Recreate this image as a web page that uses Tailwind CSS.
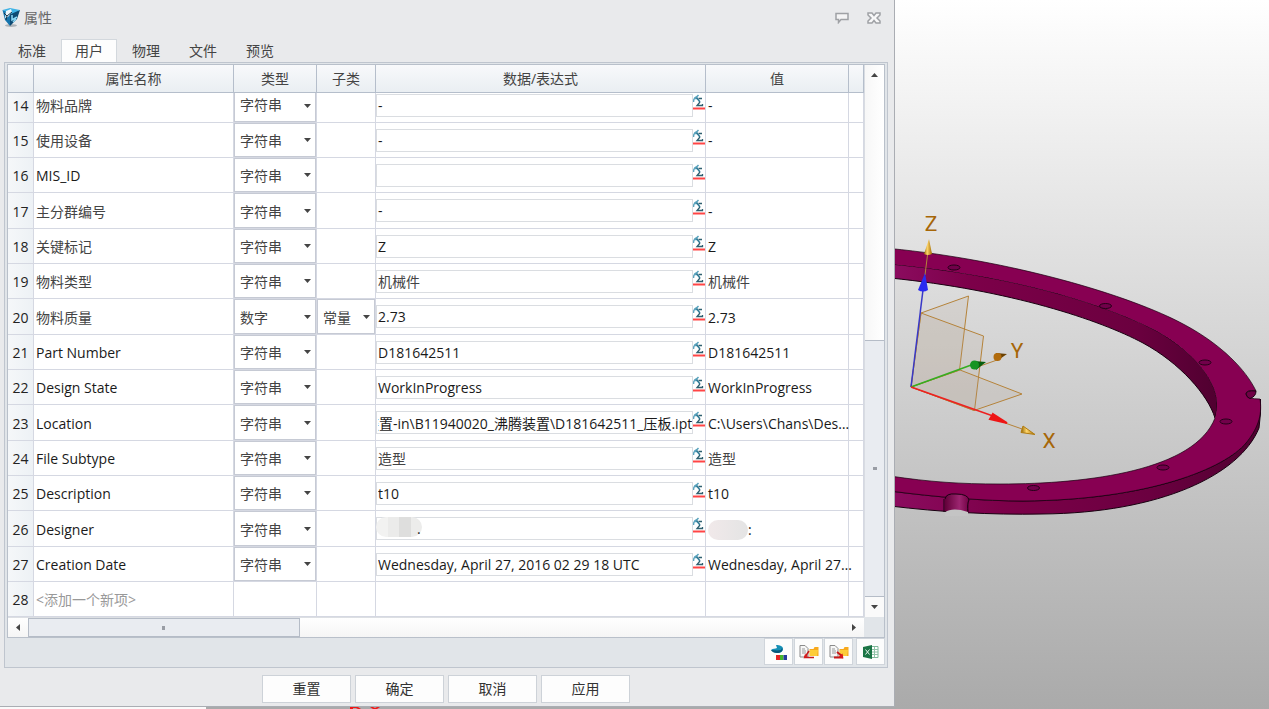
<!DOCTYPE html>
<html lang="zh-CN">
<head>
<meta charset="utf-8">
<title>属性</title>
<script src="https://cdn.jsdelivr.net/npm/@tailwindcss/browser@4"></script>
</head>
<body class="h-screen overflow-hidden bg-[#a9aaab] font-['Open_Sans','Noto_Sans_CJK_SC',sans-serif] text-sm text-[#222]">
<div class="flex h-full">

<div class="flex min-w-0 flex-[895] flex-col">
<section class="flex min-h-0 flex-1 flex-col border-r border-b border-[#aaadb3] bg-[#e9eaec] pr-1.5 pl-1" aria-label="属性">
  <header class="flex h-9 shrink-0 items-center gap-1">
    <svg class="-ml-1 size-5" viewBox="0 0 20 20" aria-hidden="true">
      <ellipse cx="11" cy="17.500" rx="6" ry="1.500" fill="#aeb3b8"/>
      <path d="M2.500 2 10 4v14L5 12z" fill="#1474ad"/>
      <path d="M10 4l10-2-3 9-7 7z" fill="#0d4a73"/>
      <path d="M2.500 2 10 0l10 2-9 4z" fill="#3fb3e6"/>
      <path d="M6 3l5-2 1 3-4 5-3 1z" fill="#eef6fa"/>
      <path d="M4 5l3 3 5-4M7 8l-1 4" stroke="#14344a" fill="none"/>
      <path d="M12 7v5l5-3M13 14l3-3" stroke="#8bd8f6" stroke-width="1.500" fill="none"/>
    </svg>
    <h1 class="flex-1 text-sm text-[#666]">属性</h1>
    <button class="flex w-7 justify-center" aria-label="反馈"><svg class="h-3 w-4" viewBox="0 0 16 12"><path d="M2 1.500h12v6H7L4.500 10.500v-3H2z" fill="#f4f4f5" stroke="#9fa1a5" stroke-width="1.500"/></svg></button>
    <button class="flex w-7 justify-center" aria-label="关闭"><svg class="h-3 w-4" viewBox="0 0 16 12"><path d="M2 1h4l2 2.500L10 1h4v2l-3 3 3 3v2h-4L8 8.500 6 11H2V9l3-3-3-3z" fill="#f8f8f9" stroke="#9fa1a5" stroke-width="1.500"/></svg></button>
  </header>

  <nav class="flex h-[26px] shrink-0 items-end gap-px pt-[3px] text-[#444]" role="tablist">
    <button class="h-[23px] w-14" role="tab">标准</button>
    <button class="h-[23px] w-14 border border-b-0 border-[#d3d8dd] bg-[#fdfdfd]" role="tab" aria-selected="true">用户</button>
    <button class="h-[23px] w-14" role="tab">物理</button>
    <button class="h-[23px] w-14" role="tab">文件</button>
    <button class="h-[23px] w-14" role="tab">预览</button>
  </nav>

  <div class="flex flex-col border border-[#bfc5ce] bg-[#e1e5e9] px-0.5 py-px">
    <div class="border border-[#b9c0ca]">
      <div class="flex">
        <div class="min-w-0 flex-1 bg-white">
          <table class="w-full table-fixed border-separate border-spacing-0">
            <colgroup><col class="w-[26px]"><col class="w-[200px]"><col class="w-[83px]"><col class="w-[59px]"><col><col class="w-[143px]"><col class="w-[15px]"></colgroup>
            <thead>
              <tr class="h-7 bg-linear-to-b from-[#f8f9fb] to-[#e9eef2] text-[#444] *:border-r *:border-b *:border-[#b5becb] *:p-0 *:font-normal">
                <th></th><th>属性名称</th><th>类型</th><th>子类</th><th>数据/表达式</th><th>值</th><th class="border-r-0"></th>
              </tr>
            </thead>
            <tbody id="rows"></tbody>
          </table>
        </div>
        <div class="flex w-5 flex-col border-l border-[#d8dce2] bg-linear-to-r from-[#f7f7f7] to-white">
          <button class="flex h-5 items-center justify-center" aria-label="向上滚动"><svg class="h-1 w-[7px]" viewBox="0 0 7 4"><path d="M0 4 3.500 0 7 4z" fill="#444"/></svg></button>
          <div class="flex-[256]"></div>
          <div class="flex flex-[256] items-center justify-center border-y border-[#b5bcc7] bg-[#e9ecf1]"><span class="h-[3px] w-1 bg-[#999da5]"></span></div>
          <button class="flex h-5 items-center justify-center bg-[#fafafa]" aria-label="向下滚动"><svg class="h-1 w-[7px]" viewBox="0 0 7 4"><path d="M0 0h7L3.500 4z" fill="#444"/></svg></button>
        </div>
      </div>
      <div class="flex h-5">
        <div class="flex flex-1 border-t border-[#dcdfe3] bg-linear-to-b from-white to-[#f5f5f5]">
          <button class="flex w-5 items-center justify-center" aria-label="向左滚动"><svg class="h-[7px] w-1" viewBox="0 0 4 7"><path d="M4 0v7L0 3.500z" fill="#444"/></svg></button>
          <div class="flex flex-[271] items-center justify-center border border-[#b5bcc7] bg-[#e9ecf1]"><span class="h-1 w-[3px] bg-[#999da5]"></span></div>
          <div class="flex-[547]"></div>
          <button class="flex w-5 items-center justify-center" aria-label="向右滚动"><svg class="h-[7px] w-1" viewBox="0 0 4 7"><path d="M0 0v7l4-3.500z" fill="#444"/></svg></button>
        </div>
        <div class="w-5"></div>
      </div>
    </div>
    <div class="flex justify-end gap-px pb-px *:flex *:h-[27px] *:w-[29px] *:items-center *:justify-center *:border *:border-[#d0d5db] *:bg-[#fcfcfc]">
      <button aria-label="颜色属性"><svg class="h-4 w-5" viewBox="0 0 20 16"><path d="M2 6C4 4 6 5 8 4L7 1c4 0 7 1 7 4 0 2-2 4-5 4-3 0-5-1-7-3z" fill="#168fb5"/><path d="M2 6c3 0 5 1 10 0l1-2c2 3-2 5-5 5C5 9 3 8 2 6z" fill="#07587c"/><path d="M7 11h4v5H7z" fill="#e42323"/><path d="M11 11h3.500v5H11z" fill="#43b52b"/><path d="M14.500 11H18v5h-3.500z" fill="#253a9c"/></svg></button>
      <button aria-label="导入"><svg class="h-4 w-5" viewBox="0 0 20 16"><path d="M1 1.500h5l3 3V13H1z" fill="#f7f7f7" stroke="#8b8b8b"/><path d="M3 5h3M3 7h4M3 9h4" stroke="#999"/><path d="M10.500 5h4l1-2h4v9h-9z" fill="#f7a91d"/><path d="M11 6h8l-1 6h-7z" fill="#fdcc39"/><path d="M5 13.500h10M6 13l4-6" stroke="#c71919" stroke-width="1.500" fill="none"/><path d="M4.500 14.500 6 10l3 2z" fill="#d91b1b"/></svg></button>
      <button aria-label="导出"><svg class="h-4 w-5" viewBox="0 0 20 16"><path d="M1 1.500h5l3 3V13H1z" fill="#f7f7f7" stroke="#8b8b8b"/><path d="M3 5h3M3 7h4M3 9h4" stroke="#999"/><path d="M10.500 5h4l1-2h4v9h-9z" fill="#f7a91d"/><path d="M11 6h8l-1 6h-7z" fill="#fdcc39"/><path d="M5 13.500h9M8 8l5 4" stroke="#c71919" stroke-width="2" fill="none"/><path d="m14.500 14.500-1-5-4 3.500z" fill="#d91b1b"/></svg></button>
      <button class="ml-0.5" aria-label="导出到 Excel"><svg class="h-4 w-5" viewBox="0 0 20 16"><path d="M10 2.500h7v11h-7z" fill="#fff" stroke="#7fb899"/><path d="M10 5.500h7M10 8h7M10 10.500h7M13.500 3v10" stroke="#8fc2a6"/><path d="m2 3 9-2v14l-9-2z" fill="#1b7445"/><path d="m4.500 5.500 4 5m0-5-4 5" stroke="#e6f2eb"/></svg></button>
    </div>
  </div>

  <footer class="flex justify-center gap-1 pt-[7px] text-[#333] *:h-7 *:w-[89px] *:border *:border-[#cdd2d8] *:bg-[#fdfdfd]">
    <button>重置</button><button>确定</button><button>取消</button><button>应用</button>
  </footer>
</section>
<div class="flex h-0.5 shrink-0">
  <div class="w-[23%] bg-[#fafafa]"></div>
  <svg class="ml-[16%] h-0.5 w-8" viewBox="0 0 32 2" aria-hidden="true"><path d="M1 0h8l3 2H9L7 1H4v1H1zM21 0h3l2 1 2-1h3l-3 2h-4z" fill="#f01818"/></svg>
</div>
</div>

<main class="min-w-0 flex-[374] bg-linear-to-b from-white to-[#aaa]">
  <svg class="h-full w-full" viewBox="895 0 374 709" aria-label="压板模型">
    <defs>
      <linearGradient id="inner" x1="0" x2="1"><stop offset="0" stop-color="#8c0c60"/><stop offset=".25" stop-color="#7c0049"/><stop offset=".75" stop-color="#6b003f"/><stop offset="1" stop-color="#500030"/></linearGradient>
      <linearGradient id="side" x1="0" x2="1"><stop offset="0" stop-color="#8c0c60"/><stop offset=".3" stop-color="#7c0049"/><stop offset=".7" stop-color="#6b0040"/><stop offset="1" stop-color="#500030"/></linearGradient>
      <linearGradient id="notch" x1="0" x2="1"><stop offset="0" stop-color="#620039"/><stop offset=".6" stop-color="#9c2570"/><stop offset="1" stop-color="#720044"/></linearGradient>
      <linearGradient id="gold" x1="0" x2="1"><stop offset="0" stop-color="#8f6200"/><stop offset=".4" stop-color="#ffd66b"/><stop offset="1" stop-color="#a06a00"/></linearGradient>
    </defs>
    <g stroke="#180010" stroke-width="1" stroke-linejoin="round">
      <path d="M890 491C935 497 985 501 1023 501C1150 500 1225 468 1246 443Q1262 424 1260.500 399V413L1259 428C1240 475 1160 513 1042 514C990 515 940 512 890 506z" fill="url(#side)"/>
      <path d="M890 264C1010 275 1100 302 1155 330C1195 352 1217 382 1217 403Q1217 412 1215 418C1208 395 1180 363 1143 343C1100 320 1010 290 890 278z" fill="url(#inner)"/>
      <path fill-rule="evenodd" stroke="none" d="M890 248.500C1010 260 1130 295 1185 325C1222 345 1246 370 1256 391Q1246 390 1246 394Q1247 399 1260 399C1262 412 1260 426 1246 443C1225 468 1150 500 1023 501C985 501 935 497 890 491V476C930 482 960 484 1000 484C1090 484 1195 470 1215 418Q1217 412 1217 403C1217 382 1195 352 1155 330C1100 302 1010 275 890 264z" fill="#870052"/>
      <path fill="none" stroke-width=".7" d="M890 248.500C1010 260 1130 295 1185 325C1222 345 1246 370 1256 391Q1246 390 1246 394Q1247 399 1260 399C1262 412 1260 426 1246 443C1225 468 1150 500 1023 501C985 501 935 497 890 491M890 476C930 482 960 484 1000 484C1090 484 1195 470 1215 418"/>
      <path d="M1256 391q-10-1-10 3 1 4 4 4.500 6-2 6-7.500z" fill="#6f0045"/>
    </g>
    <path d="M945 511V499Q946 493 956 494Q968 494 969 500V513z" fill="url(#notch)"/>
    <path d="M944 512V499M945 499Q946 493 956 494Q968 494 969 500M969 500Q967 503 968 513" fill="none" stroke="#180010"/>
    <path d="M945 512.500Q952 507 968 512V516H945z" fill="#c4c4c4"/>
    <g fill="#71004a" stroke="#250018">
      <ellipse cx="954" cy="267.500" rx="6" ry="2.500"/><ellipse cx="1105.500" cy="306" rx="6" ry="2.500"/><ellipse cx="1205" cy="362.500" rx="6" ry="2.500"/><ellipse cx="1226" cy="421.500" rx="6" ry="2.500"/><ellipse cx="1163" cy="467.500" rx="6" ry="2.500"/><ellipse cx="1033.500" cy="488" rx="6" ry="2.500"/>
    </g>
    <g fill="#b09a85" fill-opacity=".14" stroke="#b5833a">
      <path d="m911 387 10-74 47.500-17-9 74z"/><path d="m911 387 10-74 62.500 23-9 74.500z"/><path d="m911 387 49-17 62 24-48 16.500z"/>
    </g>
    <path d="m925 275 4-32M980 366l20-7M1005 423l20 7" stroke="#b5833a"/>
    <path d="m911 387 12-97" stroke="#3838c8" stroke-width="1.500"/><path d="m911 387 63-23" stroke="#35ae20" stroke-width="1.500"/><path d="m911 387 82 29" stroke="#ee2020" stroke-width="1.500"/>
    <path d="m918 290 7-17 3 17q-5 3-10 0z" fill="#2929f0"/>
    <path d="m924 254 5-15 3 15q-4 2-8 0z" fill="url(#gold)"/>
    <path d="m974 361 12 1-10 8z" fill="#075e10"/><circle cx="974.500" cy="365" r="4.500" fill="#159422"/>
    <path d="m996 353 11 1-10 7z" fill="#6c4100"/><circle cx="997.500" cy="357" r="4" fill="#b16b0d"/>
    <path d="m993 414 14 9-17-4z" fill="#ee1515" stroke="#ee1515" stroke-width="2"/>
    <path d="m1023 426 12 8.500-14-2z" fill="url(#gold)" stroke="#b17c12" stroke-width="1"/>
    <g fill="#a66608" font-family="Roboto, sans-serif" font-size="21" text-anchor="middle"><text x="931" y="231">Z</text><text x="1017" y="358">Y</text><text x="1049" y="448">X</text></g>
  </svg>
</main>
</div>

<script>
const data = [
  [14, '物料品牌', '-'], [15, '使用设备', '-'], [16, 'MIS_ID', ''], [17, '主分群编号', '-'], [18, '关键标记', 'Z'],
  [19, '物料类型', '机械件'], [20, '物料质量', '2.73'], [21, 'Part Number', 'D181642511'], [22, 'Design State', 'WorkInProgress'],
  [23, 'Location', '装置-in\\B11940020_沸腾装置\\D181642511_压板.ipt', 'C:\\Users\\Chans\\Des…'],
  [24, 'File Subtype', '造型'], [25, 'Description', 't10'], [26, 'Designer', ''],
  [27, 'Creation Date', 'Wednesday, April 27, 2016 02 29 18 UTC', 'Wednesday, April 27…'], [28, '<添加一个新项>', null],
];
const esc = s => s.replace(/</g, '&lt;').replace(/>/g, '&gt;');
const select = (label, text, first) => `<div class="relative h-full border border-[#c6cad4] ${first ? 'border-t-0' : ''}"><select aria-label="${label}" class="size-full appearance-none pl-[5px] text-[#444] outline-none ${first ? 'pb-1' : 'pt-0.5'}"><option>${text}</option></select><svg class="pointer-events-none absolute right-1 h-1 w-[7px] -translate-y-1/2 ${first ? 'top-[13px]' : 'top-1/2'}" viewBox="0 0 7 4"><path d="M0 0h7L3.500 4z" fill="#444"/></svg></div>`;
const sigma = `<button aria-label="表达式" class="shrink-0 self-start"><svg class="h-4 w-3" viewBox="0 0 12 16"><path d="M.500 8Q.500 3.500 4 2.500L5.500 1M1.500 4.500H5" stroke="#5ba3bd" stroke-width="1.500" fill="none"/><path d="M3.500 3.500 7 8" stroke="#2f7a96" stroke-width="1.500"/><path d="M9 4.500H5.500M7 8 4 11.500h5.500V10" stroke="#2f6070" stroke-width="1.300" fill="none"/><path d="M0 14.500h12" stroke="#ff4545" stroke-width="2"/></svg></button>`;
document.getElementById('rows').innerHTML = data.map(([n, name, expr, shown], i) => {
  const add = expr === null, num = n === 20, mask = n === 26, first = i === 0;
  const tone = s => /^[\u4e00-\u9fff]+$/.test(s) ? 'text-[#444]' : 'text-[#1a1a1a]';
  const textPad = first ? 'pb-1!' : 'pt-0.5!';
  return `<tr class="${first ? 'h-[30px]' : i % 3 === 0 ? 'h-9' : 'h-[35px]'} *:border-r *:border-b *:border-[#d5d8e2] *:p-0">
    <td class="bg-linear-to-r from-[#f5f7f9] to-[#edf1f5] text-center ${textPad}">${n}</td>
    <td class="pl-0.5! ${textPad} ${add ? 'text-[#999]' : tone(name)}">${esc(name)}</td>
    <td class="h-px">${add ? '' : select(name + '类型', num ? '数字' : '字符串', first)}</td>
    <td class="h-px">${num ? select('子类', '常量') : ''}</td>
    <td class="${first ? 'pb-1!' : ''}">${add ? '' : `<div class="flex items-center"><div class="relative min-w-0 flex-1"><input aria-label="${name}" value="${expr}" class="block h-[23px] w-full border border-[#dadde1] bg-white pl-px outline-none ${tone(expr)}">${mask ? '<span class="absolute top-0 left-0 flex h-5 w-[46px] overflow-hidden rounded-full *:flex-1"><i class="bg-[#f2f2f1]"></i><i class="bg-[#ebebea]"></i><i class="bg-[#dededd]"></i><i class="bg-[#ececeb]"></i></span><span class="absolute top-0.5 left-[41px]">.</span>' : ''}</div>${sigma}</div>`}</td>
    <td class="whitespace-nowrap pl-0.5! ${textPad} ${tone(expr || '')}">${mask ? '<span class="flex items-center"><i class="h-5 w-10 rounded-full bg-linear-to-r from-[#f1e9ea] to-[#e4e4e4]"></i>:</span>' : add ? '' : (shown || expr)}</td>
    <td class="border-r-0"></td></tr>`;
}).join('');
document.querySelectorAll('input').forEach(el => { el.scrollLeft = el.scrollWidth > el.clientWidth ? el.scrollWidth : 0; });
</script>
</body>
</html>
